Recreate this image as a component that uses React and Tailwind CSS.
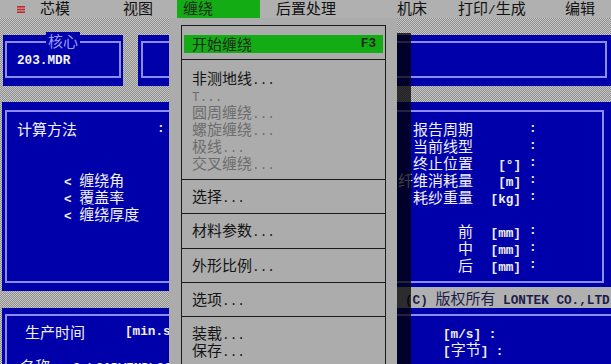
import React from "react";

const DITHER =
  "bg-[image:repeating-conic-gradient(#8c8c8c_0%_25%,#c8c8c8_0%_50%)] bg-[length:2px_2px]";

function M({ children, className = "" }) {
  return (
    <span
      className={`font-['Liberation_Mono',monospace] text-[12.7px] font-bold whitespace-pre ${className}`}
    >
      {children}
    </span>
  );
}

function Dots() {
  return (
    <span className="font-['Liberation_Mono',monospace] text-[12.7px] whitespace-pre">
      ...
    </span>
  );
}

function MenuBar() {
  return (
    <div className="flex h-[18px] bg-[#b0b0b0] text-[#111] leading-[16px]">
      <div className="w-[17px]" />
      <div className="flex w-[23px] items-center">
        <svg width="8" height="7" viewBox="0 0 8 7">
          <rect x="0" y="0" width="8" height="1.6" fill="#c42a2a" />
          <rect x="0" y="2.7" width="8" height="1.6" fill="#c42a2a" />
          <rect x="0" y="5.4" width="8" height="1.6" fill="#c42a2a" />
        </svg>
      </div>
      <div className="w-[83px]">芯模</div>
      <div className="w-[54px]">视图</div>
      <div className="w-[83px] bg-[#14ac14] pl-[6px] text-[#1e2a1e]">缠绕</div>
      <div className="w-[16px]" />
      <div className="w-[121px]">后置处理</div>
      <div className="w-[61px]">机床</div>
      <div className="w-[107px]">
        打印<M className="font-normal">/</M>生成
      </div>
      <div className="flex-1">编辑</div>
    </div>
  );
}

function Blue({ outer, inner, children }) {
  return (
    <div className={`bg-[#0000aa] ${outer}`}>
      <div className={`relative h-full border-2 border-[#8c8cf4] ${inner}`}>
        {children}
      </div>
    </div>
  );
}

const rightRows = [
  ["报告周期", ""],
  ["当前线型", ""],
  ["终止位置", "[°]"],
  ["纤维消耗量", "[m]"],
  ["耗纱重量", "[kg]"],
  null,
  ["前", "[mm]"],
  ["中", "[mm]"],
  ["后", "[mm]"],
];

function DropMenu() {
  const item = "h-[17px] whitespace-pre";
  const dis = "h-[17px] whitespace-pre text-[#6c6c6c]";
  return (
    <div className="absolute left-[169px] top-[18px] bottom-0 w-[228px] bg-[#acacac] pl-[12px] pr-[11px] pt-[7px] text-[#141414]">
      <div className="h-[420px] border border-[#1a1a1a]">
        <div className="border-b border-[#1a1a1a] px-[2px] pt-[9px] pb-[6px]">
          <div className="flex h-[18px] items-center justify-between bg-[#14ac14] pl-[8px] pr-[7px] pb-[2px] text-[#1e2a1e]">
            <span>开始缠绕</span>
            <M className="text-[#1e2a1e]">F3</M>
          </div>
        </div>
        <div className="border-b border-[#1a1a1a] pl-[10px] pt-[9px] pb-[8px]">
          <div className={item}>
            非测地线<Dots />
          </div>
          <div className={dis}>
            <M className="font-normal">T</M>
            <Dots />
          </div>
          <div className={dis}>
            圆周缠绕<Dots />
          </div>
          <div className={dis}>
            螺旋缠绕<Dots />
          </div>
          <div className={dis}>
            极线<Dots />
          </div>
          <div className={dis}>
            交叉缠绕<Dots />
          </div>
        </div>
        <div className="border-b border-[#1a1a1a] pl-[10px] pt-[7px] pb-[9px]">
          <div className={item}>
            选择<Dots />
          </div>
        </div>
        <div className="border-b border-[#1a1a1a] pl-[10px] pt-[7px] pb-[10px]">
          <div className={item}>
            材料参数<Dots />
          </div>
        </div>
        <div className="border-b border-[#1a1a1a] pl-[10px] pt-[7px] pb-[9px]">
          <div className={item}>
            外形比例<Dots />
          </div>
        </div>
        <div className="border-b border-[#1a1a1a] pl-[10px] pt-[7px] pb-[9px]">
          <div className={item}>
            选项<Dots />
          </div>
        </div>
        <div className="pl-[10px] pt-[7px] pb-[9px]">
          <div className={item}>
            装载<Dots />
          </div>
          <div className={item}>
            保存<Dots />
          </div>
        </div>
      </div>
    </div>
  );
}

export default function App() {
  return (
    <div
      className={`relative h-[364px] w-[611px] overflow-hidden ${DITHER} font-['Noto_Sans_CJK_SC',sans-serif] text-[15px] leading-[17px]`}
    >
      <MenuBar />
      <div className="flex flex-col">
        {/* top row */}
        <div className="mt-[17px] flex h-[51px]">
          <Blue outer="ml-[3px] w-[120px] px-[2px] pt-[6px] pb-[8px]" inner="">
            <div className="absolute left-1/2 top-[-11px] -translate-x-1/2 bg-[#0000aa] px-[2px] text-[#9c9cff]">
              核心
            </div>
            <div className="pl-[10px] pt-[6px] text-[#f4f4f4]">
              <M>203.MDR</M>
            </div>
          </Blue>
          <Blue outer="ml-[15px] w-[233px] px-[3px] pt-[6px] pb-[8px]" inner="" />
          <Blue outer="ml-[15px] flex-1 pl-[3px] pr-[4px] pt-[6px] pb-[8px]" inner="" />
        </div>

        {/* middle row */}
        <div className="mt-[16px] flex h-[206px]">
          <div className="ml-[2px] w-[369px]">
            <Blue outer="h-[189px] pl-[3px] pt-[8px] pb-[8px]" inner="border-r-0">
              <div className="pl-[10px] pt-[8px] text-[#f0f0f0]">
                <div className="flex h-[17px]">
                  <span className="w-[140px]">计算方法</span>
                  <M>:</M>
                </div>
                <div className="h-[17px]" />
                <div className="h-[17px]" />
                <div className="h-[17px] pl-[47px] whitespace-pre">
                  <M>{"< "}</M>缠绕角
                </div>
                <div className="h-[17px] pl-[47px] whitespace-pre">
                  <M>{"< "}</M>覆盖率
                </div>
                <div className="h-[17px] pl-[47px] whitespace-pre">
                  <M>{"< "}</M>缠绕厚度
                </div>
              </div>
            </Blue>
          </div>
          <div className="ml-[15px] flex flex-1 flex-col">
            <Blue outer="h-[185px] pl-[3px] pr-[7px] pt-[8px] pb-[4px]" inner="">
              <div className="pt-[8px] text-[#f0f0f0]">
                {rightRows.map((r, i) =>
                  r ? (
                    <div key={i} className="flex h-[17px]">
                      <span className="w-[82px] text-right whitespace-pre">{r[0]}</span>
                      <span className="w-[48px] text-right">
                        <M>{r[1]}</M>
                      </span>
                      <M className="ml-[8px]">:</M>
                    </div>
                  ) : (
                    <div key={i} className="h-[17px]" />
                  )
                )}
              </div>
            </Blue>
            <div className="h-[21px] bg-[#b0b0b0] pl-[19px] pt-[2px] text-[#1c1c4c] whitespace-pre">
              <M>{"(C) "}</M>版权所有<M>{" LONTEK CO.,LTD"}</M>
            </div>
          </div>
        </div>

        {/* bottom panel */}
        <Blue outer="ml-[2px] h-[80px] w-[640px] pl-[3px] pt-[6px]" inner="border-b-0 border-r-0">
          <div className="flex pt-[7px] text-[#f0f0f0]">
            <div className="w-[436px]">
              <div className="flex h-[17px] pl-[18px]">
                <span className="w-[100px]">生产时间</span>
                <M>[min.sec] :</M>
              </div>
              <div className="h-[17px]" />
              <div className="h-[17px] pl-[13px] whitespace-pre">
                名称<M>{" : C:\\CADWIND\\CORE"}</M>
              </div>
            </div>
            <div>
              <div className="h-[17px] whitespace-pre">
                <M>[m/s] :</M>
              </div>
              <div className="h-[17px] whitespace-pre">
                <M>[</M>字节<M>] :</M>
              </div>
            </div>
          </div>
        </Blue>
      </div>

      <DropMenu />
      <div className="absolute left-[397px] top-[33px] bottom-0 w-[14px] bg-black/75" />
    </div>
  );
}
